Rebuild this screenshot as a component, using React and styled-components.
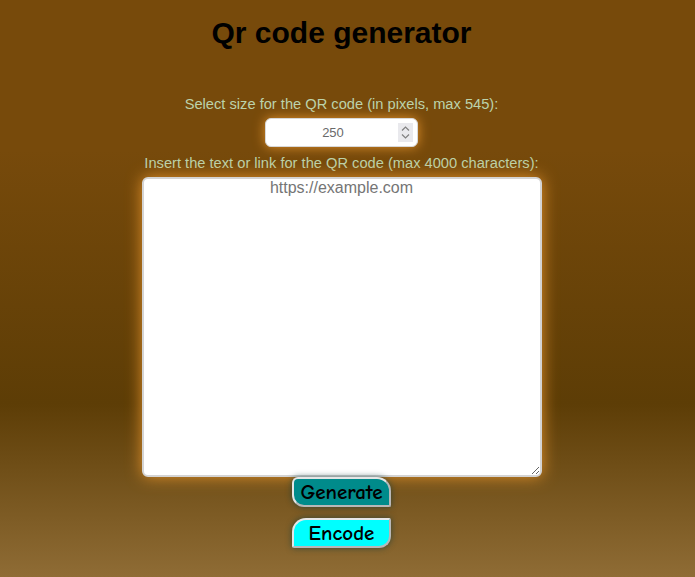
import React, { useState } from "react";
import styled, { createGlobalStyle } from "styled-components";

const Global = createGlobalStyle`
  html, body { margin: 0; padding: 0; }
  body {
    min-height: 577px;
    background: linear-gradient(to bottom, #774a0b 0%, #774a0b 26%, #5d3d06 70%, #8f6c35 100%);
    font-family: "Liberation Sans", Arial, sans-serif;
  }
`;

const Page = styled.main`
  width: 683px;
  min-height: 577px;
  box-sizing: border-box;
  padding-top: 14px;
  display: flex;
  flex-direction: column;
  align-items: center;
`;

const Title = styled.h1`
  margin: 0 0 45px;
  font-size: 30px;
  line-height: 37px;
  font-weight: bold;
  color: #000;
`;

const Label = styled.label`
  display: block;
  font-size: 14.67px;
  line-height: 17px;
  color: #bcd3ab;
  margin-bottom: ${(p) => p.$gap || 0}px;
`;

const SizeField = styled.div`
  box-sizing: border-box;
  width: 153px;
  height: 29px;
  display: flex;
  align-items: center;
  border: 1px solid #d8d8d8;
  border-radius: 6px;
  background: #fff;
  box-shadow: 0 0 12px #e0902c;
  padding: 0 4px 0 2px;
  margin-bottom: 8px;
`;

const SizeInput = styled.input`
  flex: 1;
  min-width: 0;
  height: 100%;
  border: none;
  background: transparent;
  text-align: center;
  font-family: "Liberation Sans", Arial, sans-serif;
  font-size: 13px;
  color: #6a6a6a;
  padding: 0;
  outline: none;
  -moz-appearance: textfield;
  &::-webkit-inner-spin-button,
  &::-webkit-outer-spin-button { -webkit-appearance: none; margin: 0; }
`;

const Spinner = styled.span`
  width: 15px;
  height: 19px;
  background: #e9e9ed;
  display: flex;
  flex-direction: column;
  align-items: center;
  justify-content: center;
  gap: 3px;
  cursor: default;
`;

const SpinArrow = styled.span`
  display: block;
  width: 9px;
  height: 5px;
  line-height: 0;
  & svg { display: block; }
`;

const Chevron = ({ up }) => (
  <svg width="9" height="5" viewBox="0 0 9 5">
    <path
      d={up ? "M1 4.5 L4.5 1 L8 4.5" : "M1 0.5 L4.5 4 L8 0.5"}
      fill="none"
      stroke="#808080"
      strokeWidth="1.2"
    />
  </svg>
);

const TextBox = styled.textarea`
  box-sizing: border-box;
  width: 400px;
  height: 300px;
  border: 2px solid #d4d4d4;
  border-radius: 6px;
  background: #fff;
  text-align: center;
  font-family: "Liberation Sans", Arial, sans-serif;
  font-size: 16px;
  padding: 0 2px;
  box-shadow: 0 0 16px #e0902c;
  outline: none;
  margin-top: 5px;
  &::placeholder { color: #757575; }
`;

const Action = styled.button`
  box-sizing: border-box;
  width: 99px;
  height: 30px;
  font-family: "Comic Sans MS", "Comic Neue", cursive;
  font-size: 21px;
  font-weight: 600;
  color: #000;
  background: ${(p) => p.$bg};
  border: 2px solid #b8b8b8;
  border-top-color: #e6e6e6;
  border-left-color: #e6e6e6;
  border-radius: ${(p) => p.$radius};
  box-shadow: 0 0 6px rgba(20, 60, 60, 0.7);
  cursor: pointer;
  padding: 0;
  line-height: 1;
  margin-top: ${(p) => p.$mt}px;
`;

export default function App() {
  const [size, setSize] = useState(250);
  const [text, setText] = useState("");
  const step = (d) => setSize((s) => Math.max(1, Math.min(545, Number(s) + d)));
  return (
    <>
      <Global />
      <Page>
        <Title>Qr code generator</Title>
        <Label $gap={5} htmlFor="size">Select size for the QR code (in pixels, max 545):</Label>
        <SizeField>
          <SizeInput
            id="size"
            type="number"
            min="1"
            max="545"
            value={size}
            onChange={(e) => setSize(e.target.value)}
          />
          <Spinner>
            <SpinArrow onClick={() => step(1)}><Chevron up /></SpinArrow>
            <SpinArrow onClick={() => step(-1)}><Chevron /></SpinArrow>
          </Spinner>
        </SizeField>
        <Label htmlFor="txt">Insert the text or link for the QR code (max 4000 characters):</Label>
        <TextBox
          id="txt"
          maxLength={4000}
          placeholder="https://example.com"
          value={text}
          onChange={(e) => setText(e.target.value)}
        />
        <Action $bg="#008b8b" $radius="6px 14px 2px 12px" $mt={0}>Generate</Action>
        <Action $bg="#00ffff" $radius="14px 2px 12px 2px" $mt={11}>Encode</Action>
      </Page>
    </>
  );
}
